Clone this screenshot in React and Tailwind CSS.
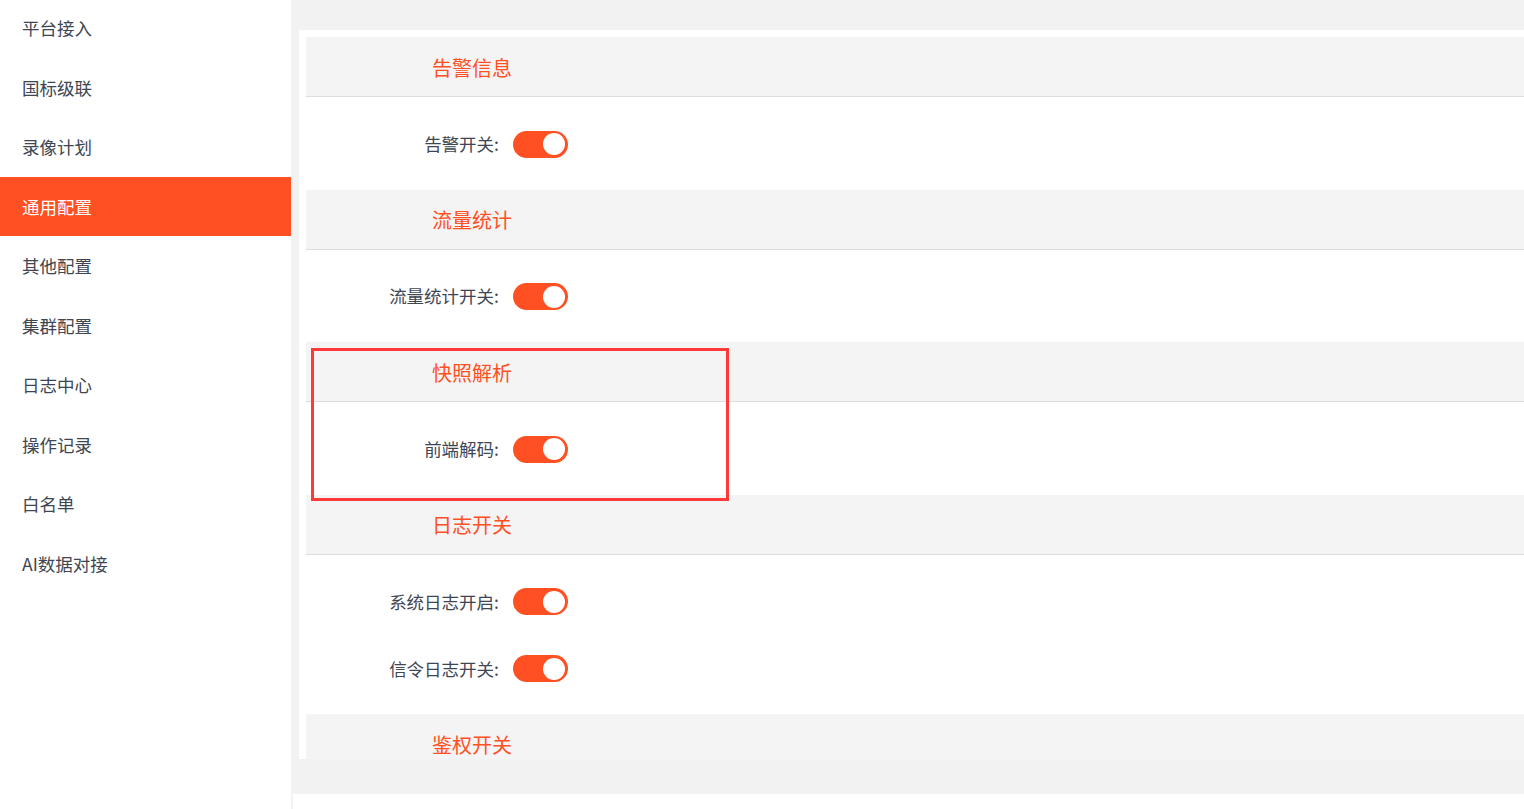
import React from "react";

const menu = ["平台接入", "国标级联", "录像计划", "通用配置", "其他配置", "集群配置", "日志中心", "操作记录", "白名单", "AI数据对接"];

const sections = [
  { title: "告警信息", rows: ["告警开关:"] },
  { title: "流量统计", rows: ["流量统计开关:"] },
  { title: "快照解析", rows: ["前端解码:"] },
  { title: "日志开关", rows: ["系统日志开启:", "信令日志开关:"] },
  { title: "鉴权开关", rows: [] },
];

function Switch() {
  return (
    <div className="w-[55px] h-[27px] rounded-full bg-[#ff5024] flex items-center justify-end pr-[3px]">
      <div className="w-[22px] h-[22px] rounded-full bg-white" />
    </div>
  );
}

export default function App() {
  return (
    <div
      className="w-[1524px] h-[809px] flex overflow-hidden bg-[#f2f2f2]"
      style={{ fontFamily: '"Noto Sans CJK SC", "Noto Sans", sans-serif' }}
    >
      <div className="w-[291px] h-full bg-white shrink-0">
        <div className="mt-[-2px]">
          {menu.map((m, i) => (
            <div
              key={m}
              className={
                "h-[59.5px] flex items-center pl-[22px] pt-[1px] text-[17.5px] " +
                (i === 3 ? "bg-[#ff5024] text-white" : "text-[#3d4652]")
              }
            >
              {m}
            </div>
          ))}
        </div>
      </div>
      <div className="flex-1 flex flex-col overflow-hidden relative">
        <div className="h-[30px] shrink-0" />
        <div className="ml-[8px] mr-[-40px] h-[729px] shrink-0 bg-white pl-[7px] pt-[7px] overflow-hidden">
          {sections.map((s) => (
            <div key={s.title}>
              <div className="h-[60px] bg-[#f4f4f4] border-b border-[#dcdcdc] flex items-center pt-[2px] pl-[126px] text-[20px] text-[#ff5024]">
                {s.title}
              </div>
              {s.rows.length > 0 && (
                <div className="pt-[27px] pb-[25.6px] flex flex-col gap-[27px]">
                  {s.rows.map((r) => (
                    <div key={r} className="h-[40px] flex items-center">
                      <div className="w-[193px] text-right text-[17.5px] text-[#3d4652]">{r}</div>
                      <div className="ml-[14px]">
                        <Switch />
                      </div>
                    </div>
                  ))}
                </div>
              )}
            </div>
          ))}
        </div>
        <div className="h-[35px] shrink-0" />
        <div className="flex-1 ml-[2px] bg-white" />
        <div className="absolute left-[20px] top-[348px] w-[418px] h-[153px] border-[3px] border-[#ff3838]" />
      </div>
    </div>
  );
}
